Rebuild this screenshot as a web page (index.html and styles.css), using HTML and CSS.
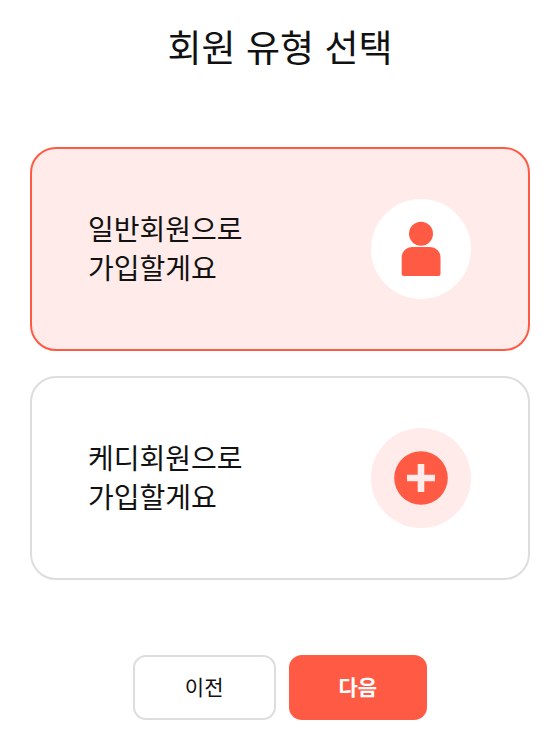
FILE: index.html
```html
<!DOCTYPE html>
<html lang="ko">
  <head>
    <meta charset="UTF-8" />
    <meta name="viewport" content="width=device-width, initial-scale=1.0" />
    <title>회원 유형 선택</title>
    <link rel="stylesheet" href="styles.css">
  </head>
  <body>
    <form class="join">
      <h1 class="join-title" id="join-title">회원 유형 선택</h1>

      <div class="type-list" role="radiogroup" aria-labelledby="join-title">
        <input class="type-radio" type="radio" name="type" id="type-normal" value="normal" checked />
        <label class="type-card" for="type-normal">
          <span class="type-text">일반회원으로<br />가입할게요</span>
          <span class="type-icon">
            <svg viewBox="0 0 100 100" fill="currentColor" aria-hidden="true">
              <circle cx="50" cy="34.7" r="12" />
              <path d="M41 48h18a10.500 10.500 0 0 1 10.500 10.500v16.500a2 2 0 0 1-2 2H32.700a2 2 0 0 1-2-2V58.300a10.300 10.300 0 0 1 10.300-10.300z" />
            </svg>
          </span>
        </label>

        <input class="type-radio" type="radio" name="type" id="type-kedy" value="kedy" />
        <label class="type-card" for="type-kedy">
          <span class="type-text">케디회원으로<br />가입할게요</span>
          <span class="type-icon">
            <svg viewBox="0 0 100 100" fill="currentColor" aria-hidden="true">
              <path
                fill-rule="evenodd"
                d="M50 23.200a26.800 26.800 0 1 0 0 53.600a26.800 26.800 0 1 0 0-53.600zM46.700 36h6.600v10.700H64v6.600H53.300V64h-6.600V53.300H36v-6.600h10.700z"
              />
            </svg>
          </span>
        </label>
      </div>

      <div class="join-buttons">
        <button class="btn btn-prev" type="button">이전</button>
        <button class="btn btn-next" type="submit">다음</button>
      </div>
    </form>
  </body>
</html>
```

FILE: styles.css
```css
* {
  box-sizing: border-box;
}

body {
  margin: 0;
  background-color: #fff;
  color: #111;
  font-family: "Noto Sans CJK KR", "Noto Sans", sans-serif;
}

.join {
  max-width: 800px;
  margin: 0 auto;
  padding: 20px 30px 30px;
}

.join-title {
  margin: 0 0 75px;
  font-size: 37px;
  font-weight: 400;
  line-height: 52px;
  text-align: center;
}

.type-list {
  display: flex;
  flex-direction: column;
  gap: 25px;
}

/* hidden radios stay focusable, the card is their label */
.type-radio {
  position: absolute;
  opacity: 0;
  pointer-events: none;
}

.type-card {
  display: flex;
  align-items: center;
  justify-content: space-between;
  padding: 50px 57px 50px 56px;
  border: 2px solid #ddd;
  border-radius: 26px;
  cursor: pointer;
}

.type-text {
  padding-bottom: 2px;
  font-size: 28px;
  line-height: 39px;
}

.type-icon {
  flex: none;
  width: 100px;
  height: 100px;
  border-radius: 50%;
  background-color: #ffebe9;
  color: #ff5a43;
}

.type-icon svg {
  display: block;
}

.type-radio:checked + .type-card {
  border-color: #ff5a43;
  background-color: #ffebe9;
}

.type-radio:checked + .type-card .type-icon {
  background-color: #fff;
}

.type-radio:focus-visible + .type-card {
  outline: 2px solid #111;
}

.join-buttons {
  display: flex;
  justify-content: center;
  gap: 13px;
  margin-top: 75px;
}

.btn {
  padding: 16px 50px 18px;
  border: 2px solid #ddd;
  border-radius: 13px;
  background-color: #fff;
  color: #111;
  font-family: inherit;
  font-size: 21px;
  line-height: 27px;
  cursor: pointer;
}

.btn-next {
  border-width: 2px 0;
  border-color: #ff5a43;
  background-color: #ff5a43;
  color: #fff;
  font-weight: 700;
}
```
